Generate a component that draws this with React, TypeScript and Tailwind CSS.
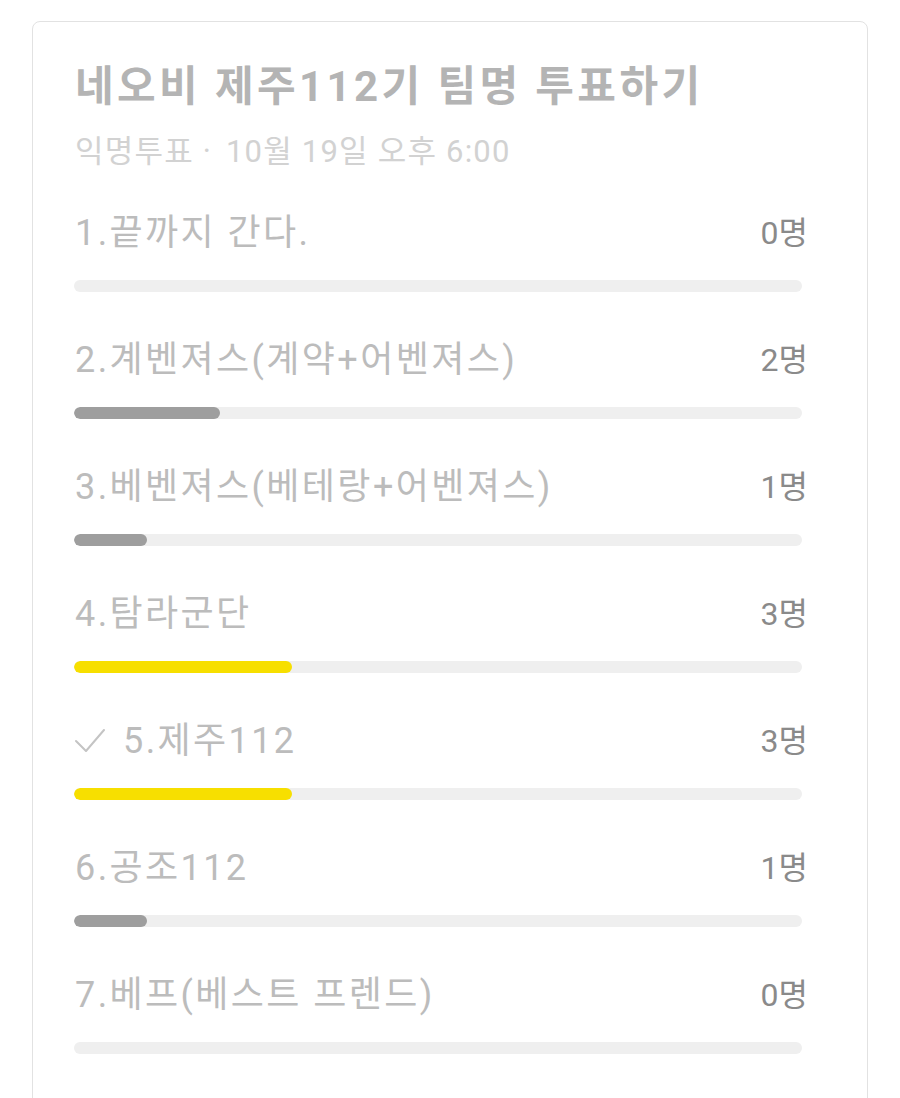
const options = [
  { label: "1.끝까지 간다.", votes: 0 },
  { label: "2.계벤져스(계약+어벤져스)", votes: 2 },
  { label: "3.베벤져스(베테랑+어벤져스)", votes: 1 },
  { label: "4.탐라군단", votes: 3 },
  { label: "5.제주112", votes: 3, mine: true },
  { label: "6.공조112", votes: 1 },
  { label: "7.베프(베스트 프렌드)", votes: 0 },
];

const total = 10;
const top = 3;

function Check() {
  return (
    <svg width="30" height="26" viewBox="0 0 30 26" fill="none" className="mr-[18px] shrink-0">
      <path d="M1 13 L11 23 L29 2" stroke="#c4c4c4" strokeWidth="2" strokeLinecap="round" strokeLinejoin="round" />
    </svg>
  );
}

export default function App() {
  return (
    <div
      className="w-[900px] h-[1098px] overflow-hidden bg-white pt-[21px] pl-[32px]"
      style={{ fontFamily: "Roboto, 'Noto Sans CJK KR', sans-serif" }}
    >
      <div className="w-[836px] h-[1200px] border border-[#e2e2e2] rounded-t-[8px] pt-[41px] pl-[41px]">
        <h1 className="text-[42px] leading-[48px] font-bold tracking-[3.4px] text-[#b4b4b4] pl-[1px]">
          네오비 제주112기 팀명 투표하기
        </h1>
        <p className="mt-[21px] text-[31px] leading-[40px] tracking-[1.2px] text-[#d2d2d2] pl-[1px]">
          익명투표 <span className="mr-[5px]">·</span> 10월 19일 오후 6:00
        </p>
        <div className="mt-[39px] w-[734px] flex flex-col">
          {options.map((o) => (
            <div key={o.label} className="h-[127px]">
              <div className="h-[44px] flex items-center justify-between">
                <div className="flex items-center text-[36px] leading-[44px] tracking-[2.4px] text-[#bcbcbc] pl-[1px]">
                  {o.mine && <Check />}
                  <span>{o.label}</span>
                </div>
                <span className="text-[32px] leading-[44px] text-[#8a8a8a]">{o.votes}명</span>
              </div>
              <div className="mt-[25px] w-[728px] h-[12px] rounded-full bg-[#efefef] overflow-hidden">
                {o.votes > 0 && (
                  <div
                    className={o.votes === top ? "h-full rounded-full bg-[#f7df00]" : "h-full rounded-full bg-[#9e9e9e]"}
                    style={{ width: `${(o.votes / total) * 100}%` }}
                  />
                )}
              </div>
            </div>
          ))}
        </div>
      </div>
    </div>
  );
}
